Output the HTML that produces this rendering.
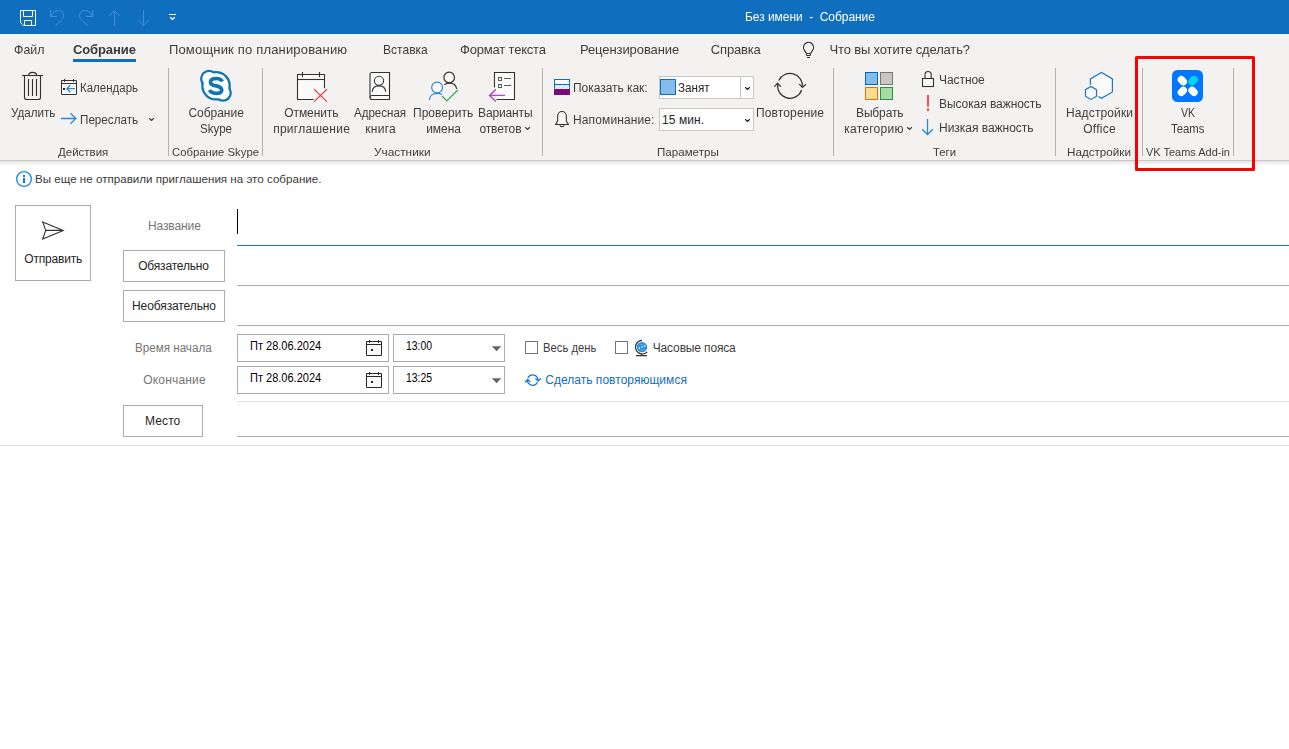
<!DOCTYPE html>
<html lang="ru"><head><meta charset="utf-8"><title>Без имени - Собрание</title>
<style>
*{box-sizing:border-box;margin:0;padding:0}
html,body{width:1289px;height:749px;overflow:hidden;background:#fff}
body{position:relative;font-family:"Liberation Sans",sans-serif;font-size:12px;color:#444}
.t{position:absolute;white-space:pre;display:block}
.abs{position:absolute}
#titlebar{left:0;top:0;width:1289px;height:34px;background:#106ebe}
#ribbon{left:0;top:34px;width:1289px;height:126px;background:#f3f2f1}
#shadow{left:0;top:160px;width:1289px;height:6px;background:linear-gradient(to bottom,#c9c8c7 0,#c9c8c7 1px,#e5e5e5 1px,#efefef 3px,#ffffff 6px)}
.sep{position:absolute;top:68px;width:1px;height:88px;background:#b3b0ad}
.btn{position:absolute;border:1px solid #adaaa8;background:#fff}
.box{position:absolute;border:1px solid #adaaa8;background:#fff}
.dd{position:absolute;border:1px solid #c6c6c6;background:#fff}
.hl{position:absolute;height:1px}
svg{position:absolute;left:0;top:0;overflow:visible}
</style></head>
<body>
<div class="abs" id="titlebar"></div>
<div class="abs" id="ribbon"></div>
<div class="abs" id="shadow"></div>
<div class="sep" style="left:168px"></div>
<div class="sep" style="left:262px"></div>
<div class="sep" style="left:542px"></div>
<div class="sep" style="left:833px"></div>
<div class="sep" style="left:1055px"></div>
<div class="sep" style="left:1142px"></div>
<div class="sep" style="left:1233px"></div>
<div class="abs" style="left:73px;top:59px;width:63px;height:3px;background:#106ebe"></div>
<div class="dd" style="left:659px;top:76px;width:95px;height:23px"></div>
<div class="abs" style="left:740px;top:77px;width:1px;height:21px;background:#c6c6c6"></div>
<div class="dd" style="left:659px;top:108px;width:95px;height:23px"></div>
<div class="btn" style="left:15px;top:205px;width:76px;height:76px"></div>
<div class="btn" style="left:123px;top:250px;width:102px;height:32px"></div>
<div class="btn" style="left:123px;top:290px;width:102px;height:32px"></div>
<div class="btn" style="left:123px;top:405px;width:80px;height:32px"></div>
<div class="box" style="left:237px;top:334px;width:152px;height:28px"></div>
<div class="box" style="left:393px;top:334px;width:112px;height:28px"></div>
<div class="box" style="left:237px;top:366px;width:152px;height:28px"></div>
<div class="box" style="left:393px;top:366px;width:112px;height:28px"></div>
<div class="box" style="left:525px;top:341px;width:13px;height:13px;border-color:#767676"></div>
<div class="box" style="left:615px;top:341px;width:13px;height:13px;border-color:#767676"></div>
<div class="hl" style="left:237px;top:245px;width:1052px;background:#0f7ad5"></div>
<div class="hl" style="left:237px;top:285px;width:1052px;background:#adaaa8"></div>
<div class="hl" style="left:237px;top:325px;width:1052px;background:#adaaa8"></div>
<div class="hl" style="left:237px;top:401px;width:1052px;background:#e1e1e1"></div>
<div class="hl" style="left:237px;top:436px;width:1052px;background:#adaaa8"></div>
<div class="hl" style="left:0px;top:445px;width:1289px;background:#e1e1e1"></div>
<div class="abs" style="left:237px;top:209px;width:1px;height:25px;background:#000"></div>
<div class="abs" style="left:1135px;top:56px;width:120px;height:115px;border:3px solid #ff0000;border-radius:1.5px"></div>
<span class="t" style="left:662.09px;top:114px;font-size:12px;line-height:12px;color:#262626;letter-spacing:0.08px;">15 мин.</span>
<span class="t" style="left:35.05px;top:173px;font-size:12px;line-height:12px;color:#3b3a39;transform:scale(0.9671,0.92);transform-origin:0 10px;">Вы еще не отправили приглашения на это собрание.</span>
<span class="t" style="left:24.23px;top:253px;font-size:12px;line-height:12px;color:#262626;letter-spacing:-0.17px;">Отправить</span>
<span class="t" style="left:148.02px;top:220px;font-size:12px;line-height:12px;color:#767676;letter-spacing:-0.12px;">Название</span>
<span class="t" style="left:138.23px;top:260px;font-size:12px;line-height:12px;color:#262626;letter-spacing:-0.18px;">Обязательно</span>
<span class="t" style="left:132.02px;top:300px;font-size:12px;line-height:12px;color:#262626;letter-spacing:-0.1px;">Необязательно</span>
<span class="t" style="left:135.05px;top:342px;font-size:12px;line-height:12px;color:#767676;transform:scale(0.9693,1);transform-origin:0 10px;">Время начала</span>
<span class="t" style="left:250.11px;top:340px;font-size:12px;line-height:12px;color:#000000;transform:scale(0.9187,1);transform-origin:0 10px;">Пт 28.06.2024</span>
<span class="t" style="left:406.41px;top:340px;font-size:12px;line-height:12px;color:#000000;transform:scale(0.8692,1);transform-origin:0 10px;">13:00</span>
<span class="t" style="left:543.08px;top:342px;font-size:12px;line-height:12px;color:#3d3d3d;transform:scale(0.9376,1);transform-origin:0 10px;">Весь день</span>
<span class="t" style="left:652.76px;top:342px;font-size:12px;line-height:12px;color:#3d3d3d;letter-spacing:-0.15px;">Часовые пояса</span>
<span class="t" style="left:143.33px;top:374px;font-size:12px;line-height:12px;color:#767676;letter-spacing:0.16px;">Окончание</span>
<span class="t" style="left:250.11px;top:372px;font-size:12px;line-height:12px;color:#000000;transform:scale(0.9187,1);transform-origin:0 10px;">Пт 28.06.2024</span>
<span class="t" style="left:406.4px;top:372px;font-size:12px;line-height:12px;color:#000000;transform:scale(0.8702,1);transform-origin:0 10px;">13:25</span>
<span class="t" style="left:545.19px;top:374px;font-size:12px;line-height:12px;color:#106ebe;letter-spacing:0.03px;">Сделать повторяющимся</span>
<span class="t" style="left:145.02px;top:415px;font-size:12px;line-height:12px;color:#262626;letter-spacing:0.11px;">Место</span>
<div class="abs" id="gtxt" style="left:0;top:0;width:1289px;height:170px;will-change:transform">
<span class="t" style="left:745.02px;top:11px;font-size:12px;line-height:12px;color:#ffffff;letter-spacing:-0.05px;">Без имени  -  Собрание</span>
<span class="t" style="left:14.19px;top:43px;font-size:13px;line-height:13px;color:#3d3d3d;transform:scale(0.9532,1);transform-origin:0 11px;">Файл</span>
<span class="t" style="left:72.97px;top:43px;font-size:13px;line-height:13px;color:#3b3a39;font-weight:700;letter-spacing:-0.1px;">Собрание</span>
<span class="t" style="left:168.95px;top:43px;font-size:13px;line-height:13px;color:#3d3d3d;letter-spacing:0.18px;">Помощник по планированию</span>
<span class="t" style="left:383.01px;top:43px;font-size:13px;line-height:13px;color:#3d3d3d;transform:scale(0.9268,1);transform-origin:0 11px;">Вставка</span>
<span class="t" style="left:460.05px;top:43px;font-size:13px;line-height:13px;color:#3d3d3d;letter-spacing:-0.19px;">Формат текста</span>
<span class="t" style="left:579.93px;top:43px;font-size:13px;line-height:13px;color:#3d3d3d;letter-spacing:-0.08px;">Рецензирование</span>
<span class="t" style="left:710.84px;top:43px;font-size:13px;line-height:13px;color:#3d3d3d;letter-spacing:-0.17px;">Справка</span>
<span class="t" style="left:829.48px;top:43px;font-size:13px;line-height:13px;color:#3d3d3d;letter-spacing:-0.15px;">Что вы хотите сделать?</span>
<span class="t" style="left:10.99px;top:107px;font-size:12px;line-height:12px;color:#3d3d3d;transform:scale(0.9686,1);transform-origin:0 10px;">Удалить</span>
<span class="t" style="left:80.06px;top:82px;font-size:12px;line-height:12px;color:#3d3d3d;transform:scale(0.9594,1);transform-origin:0 10px;">Календарь</span>
<span class="t" style="left:80.05px;top:114px;font-size:12px;line-height:12px;color:#3d3d3d;transform:scale(0.9718,1);transform-origin:0 10px;">Переслать</span>
<span class="t" style="left:58.22px;top:146px;font-size:12px;line-height:12px;color:#3d3d3d;transform:scale(0.9563,0.915);transform-origin:0 10px;">Действия</span>
<span class="t" style="left:188.39px;top:107px;font-size:12px;line-height:12px;color:#3d3d3d;letter-spacing:-0.02px;">Собрание</span>
<span class="t" style="left:199.78px;top:123px;font-size:12px;line-height:12px;color:#3d3d3d;transform:scale(0.9603,1);transform-origin:0 10px;">Skype</span>
<span class="t" style="left:172.23px;top:146px;font-size:12px;line-height:12px;color:#3d3d3d;transform:scale(0.9428,0.915);transform-origin:0 10px;">Собрание Skype</span>
<span class="t" style="left:284.23px;top:107px;font-size:12px;line-height:12px;color:#3d3d3d;letter-spacing:-0.08px;">Отменить</span>
<span class="t" style="left:273.17px;top:123px;font-size:12px;line-height:12px;color:#3d3d3d;letter-spacing:0.27px;">приглашение</span>
<span class="t" style="left:354.38px;top:107px;font-size:12px;line-height:12px;color:#3d3d3d;transform:scale(0.9625,1);transform-origin:0 10px;">Адресная</span>
<span class="t" style="left:365.19px;top:123px;font-size:12px;line-height:12px;color:#3d3d3d;letter-spacing:0.31px;">книга</span>
<span class="t" style="left:413.03px;top:107px;font-size:12px;line-height:12px;color:#3d3d3d;letter-spacing:0.02px;">Проверить</span>
<span class="t" style="left:426.17px;top:123px;font-size:12px;line-height:12px;color:#3d3d3d;letter-spacing:-0.05px;">имена</span>
<span class="t" style="left:478.02px;top:107px;font-size:12px;line-height:12px;color:#3d3d3d;letter-spacing:-0.14px;">Варианты</span>
<span class="t" style="left:479.4px;top:123px;font-size:12px;line-height:12px;color:#3d3d3d;letter-spacing:-0.12px;">ответов</span>
<span class="t" style="left:373.98px;top:146px;font-size:12px;line-height:12px;color:#3d3d3d;transform:scale(0.9862,0.915);transform-origin:0 10px;">Участники</span>
<span class="t" style="left:573.03px;top:82px;font-size:12px;line-height:12px;color:#3d3d3d;letter-spacing:-0.04px;">Показать как:</span>
<span class="t" style="left:677.72px;top:82px;font-size:12px;line-height:12px;color:#262626;transform:scale(0.9734,1);transform-origin:0 10px;">Занят</span>
<span class="t" style="left:573.02px;top:114px;font-size:12px;line-height:12px;color:#3d3d3d;letter-spacing:0.12px;">Напоминание:</span>
<span class="t" style="left:756.03px;top:107px;font-size:12px;line-height:12px;color:#3d3d3d;letter-spacing:0.13px;">Повторение</span>
<span class="t" style="left:657.06px;top:146px;font-size:12px;line-height:12px;color:#3d3d3d;transform:scale(0.9652,0.915);transform-origin:0 10px;">Параметры</span>
<span class="t" style="left:856.02px;top:107px;font-size:12px;line-height:12px;color:#3d3d3d;letter-spacing:-0.14px;">Выбрать</span>
<span class="t" style="left:844.19px;top:123px;font-size:12px;line-height:12px;color:#3d3d3d;letter-spacing:0.27px;">категорию</span>
<span class="t" style="left:938.96px;top:74px;font-size:12px;line-height:12px;color:#3d3d3d;letter-spacing:-0.06px;">Частное</span>
<span class="t" style="left:939.02px;top:98px;font-size:12px;line-height:12px;color:#3d3d3d;letter-spacing:-0.07px;">Высокая важность</span>
<span class="t" style="left:939.02px;top:122px;font-size:12px;line-height:12px;color:#3d3d3d;letter-spacing:-0.03px;">Низкая важность</span>
<span class="t" style="left:933.45px;top:146px;font-size:12px;line-height:12px;color:#3d3d3d;transform:scale(0.9434,0.915);transform-origin:0 10px;">Теги</span>
<span class="t" style="left:1066.02px;top:107px;font-size:12px;line-height:12px;color:#3d3d3d;letter-spacing:0.13px;">Надстройки</span>
<span class="t" style="left:1083.13px;top:123px;font-size:12px;line-height:12px;color:#3d3d3d;letter-spacing:0.28px;">Office</span>
<span class="t" style="left:1067.04px;top:146px;font-size:12px;line-height:12px;color:#3d3d3d;transform:scale(0.9715,0.915);transform-origin:0 10px;">Надстройки</span>
<span class="t" style="left:1180.75px;top:107px;font-size:12px;line-height:12px;color:#3d3d3d;transform:scale(0.8845,1);transform-origin:0 10px;">VK</span>
<span class="t" style="left:1171.04px;top:123px;font-size:12px;line-height:12px;color:#3d3d3d;transform:scale(0.9469,1);transform-origin:0 10px;">Teams</span>
<span class="t" style="left:1145.55px;top:146px;font-size:12px;line-height:12px;color:#3d3d3d;transform:scale(0.9143,0.915);transform-origin:0 10px;">VK Teams Add-in</span>
</div>
<svg width="1289" height="749" viewBox="0 0 1289 749" fill="none" stroke-linecap="butt" stroke-linejoin="miter">
<!-- quick access toolbar -->
<g stroke="#ffffff" stroke-width="1">
<path d="M20.500 10.500H35.500V25.500H23.500L20.500 22.500Z"/>
<path d="M23.500 10.500V16.500H32.500V10.500"/>
<path d="M24.500 25.500V20.500H31.500V25.500"/>
<path d="M169 14.500H176"/>
<path d="M170.500 17.500L172.500 19.500L174.500 17.500" stroke-width="1.300" stroke-linecap="round" stroke-linejoin="round"/>
</g>
<g stroke="#4290da" stroke-width="1">
<path d="M50.500 10V16.500H57"/>
<path d="M50.800 16.200C52.600 12.600 55.200 10.500 58.400 10.500C61.500 10.500 63.700 12.600 63.700 15.500C63.700 17.400 62.800 18.800 61.200 20.400L55.400 25.800"/>
<path d="M92.800 10V16.500H86.300"/>
<path d="M92.500 16.200C90.700 12.600 88.100 10.500 84.900 10.500C81.800 10.500 79.600 12.600 79.600 15.500C79.600 17.400 80.500 18.800 82.100 20.400L87.900 25.800"/>
<path d="M114.500 10.800V26M109.200 16L114.500 10.700L119.800 16"/>
<path d="M143.500 10V25.200M138.200 20L143.500 25.300L148.800 20"/>
</g>
<!-- bulb -->
<g stroke="#333231" stroke-width="1.200">
<path d="M806.500 53.500L804.600 50.600A5 5 0 1 1 812.400 50.600L810.500 53.500"/>
<path d="M806.500 53.500H810.500V55.500H806.500Z" stroke-width="1"/>
<path d="M807 57.500H810" stroke-width="1"/>
</g>
<!-- trash -->
<g stroke="#333231" stroke-width="1.100">
<path d="M22 75.500H43"/>
<path d="M28.500 75.500C28.500 73.300 30 72.400 32.600 72.400C35.200 72.400 36.700 73.300 36.700 75.500"/>
<path d="M24.500 75.500V97.500Q24.500 99.500 26.500 99.500H38.500Q40.500 99.500 40.500 97.500V75.500"/>
<path d="M28.500 79V96M32.500 79V96M36.500 79V96"/>
</g>
<!-- calendar with arrow -->
<g stroke="#333231" stroke-width="1">
<path d="M61.500 80.500H76.500V94.500H61.500Z" fill="#fafafa"/>
<path d="M61.500 83.500H76.500"/>
<path d="M64.500 79V82M73.500 79V82"/>
<rect x="63" y="88" width="2" height="2" fill="#222" stroke="none"/>
</g>
<g stroke="#2b88d8" stroke-width="1.300">
<path d="M66.800 88.700H75M70.300 85.200L66.800 88.700L70.300 92.200"/>
<path d="M61 118.500H75.800M70.500 113.200L75.800 118.500L70.500 123.800"/>
</g>
<!-- chevrons -->
<g stroke="#444" stroke-width="1.150" stroke-linecap="round" stroke-linejoin="round">
<path d="M149.500 118.500L151.500 120.500L153.500 118.500"/>
<path d="M525.500 127.500L527.500 129.500L529.500 127.500"/>
<path d="M907.500 127.500L909.500 129.500L911.500 127.500"/>
<path d="M745.500 87.500L747.500 89.500L749.500 87.500" stroke="#222"/>
<path d="M745.500 119.500L747.500 121.500L749.500 119.500" stroke="#222"/>
</g>
<!-- skype -->
<g stroke="none">
<circle cx="216" cy="85.800" r="14.800" fill="#0e75b4"/>
<circle cx="209" cy="78.800" r="9" fill="#0e75b4"/>
<circle cx="222.900" cy="92.800" r="9" fill="#0e75b4"/>
<circle cx="216" cy="85.800" r="12.500" fill="#fff"/>
<circle cx="209" cy="78.800" r="6.700" fill="#fff"/>
<circle cx="222.900" cy="92.800" r="6.700" fill="#fff"/>
</g>
<path d="M222.300 81.600C221.400 79.500 219.200 78.500 216.100 78.500C212.600 78.500 210.500 80 210.500 82.200C210.500 84.500 212.700 85.300 216.100 85.900C219.600 86.500 221.700 87.800 221.700 90.200C221.700 92.400 219.500 93.300 216.100 93.300C213 93.300 210.700 92.300 209.500 90" stroke="#0e75b4" stroke-width="3.700"/>
<!-- cancel invitation -->
<g stroke="#333231" stroke-width="1.100">
<path d="M313.500 99.500H297.500V74.500H324.500V88.300" fill="#fafafa"/>
<path d="M297.500 79.500H324.500"/>
<path d="M302.500 72V77M319.500 72V77"/>
</g>
<path d="M314.100 89.200L326.900 101.600M326.900 89.200L314.100 101.600" stroke="#e8484f" stroke-width="1.300"/>
<!-- address book -->
<g stroke="#333231" stroke-width="1.100">
<path d="M370 74.500Q370 72.500 372 72.500H389.500V99.500H372Q370 99.500 370 97.500Z" fill="#fafafa"/>
<path d="M370 97.500Q370 95.500 372 95.500H389.500"/>
<circle cx="379" cy="80.800" r="4.600"/>
<path d="M372.200 91.800C372.500 88 375.500 85.900 379 85.900C382.500 85.900 385.400 88 385.700 91.800"/>
</g>
<!-- check names -->
<g stroke-width="1.200">
<circle cx="449.200" cy="77.500" r="5.300" stroke="#333231" fill="#fafafa"/>
<path d="M444.300 84.700C446 83.500 448 83.200 449.800 83.200C453.500 83.200 456 85.500 456.700 89" stroke="#333231"/>
<circle cx="437.100" cy="87.500" r="5.400" stroke="#2b88d8" fill="#fafafa"/>
<path d="M429.400 100C429.600 96 432.800 93.400 437 93.400C439 93.400 440.700 93.800 442 94.500" stroke="#2b88d8"/>
<path d="M442 96L446.900 100.900L457.700 90" stroke="#3aa655" stroke-width="1.300"/>
</g>
<!-- response options -->
<g stroke="#333231" stroke-width="1.100">
<path d="M494.500 87.500V72.500H514.500V99.500H496.500" fill="#fafafa"/>
<rect x="498.500" y="77.500" width="3" height="3" stroke="#605e5c"/>
<rect x="498.500" y="84.500" width="3" height="3" stroke="#605e5c"/>
<path d="M504 78.500H511M504 85.500H511" stroke="#605e5c"/>
</g>
<path d="M489.500 95.400H505M495.900 89.200L489.500 95.400L495.900 101.600" stroke="#b146c2" stroke-width="1.400"/>
<!-- show as -->
<g>
<rect x="554.500" y="79.500" width="15" height="10" fill="#fff" stroke="#0f6cbd"/>
<rect x="555" y="85" width="14" height="4" fill="#cfe5f7"/>
<path d="M555 88.500L558.500 85M559 89L563 85M563.500 89L567.500 85M567.500 89L569 87.500" stroke="#fff" stroke-width="1"/>
<path d="M554.500 84.500H569.500" stroke="#0f6cbd"/>
<rect x="554" y="89" width="16" height="6" fill="#7a0a78"/>
</g>
<!-- bell -->
<g stroke="#333231" stroke-width="1.100">
<path d="M555.500 124.500H568.500L566.300 121V116A4.300 4.500 0 0 0 557.700 116V121Z" fill="#fafafa" stroke-linejoin="round"/>
<path d="M560 125.200Q560 126.700 562 126.700Q564 126.700 564 125.200"/>
</g>
<!-- busy square -->
<rect x="660.500" y="79.500" width="15" height="15" fill="#84bceb" stroke="#106ebe"/>
<!-- recurrence -->
<g stroke="#333231" stroke-width="1.200">
<path d="M778.760 80.610A12.400 12.400 0 0 1 802.320 87.300"/>
<path d="M801.670 90.030A12.400 12.400 0 0 1 777.840 83.400"/>
<path d="M799.200 84.200L802.400 87.400L805.800 84.200"/>
<path d="M774.200 86.600L777.600 83.300L780.900 86.600"/>
</g>
<!-- categories -->
<g stroke-width="1">
<rect x="865.500" y="72.500" width="12" height="12" fill="#84bceb" stroke="#0566b8"/>
<rect x="880.500" y="72.500" width="12" height="12" fill="#c8c6c4" stroke="#7a7876"/>
<rect x="865.500" y="87.500" width="12" height="12" fill="#f7dd93" stroke="#e0700a"/>
<rect x="880.500" y="87.500" width="12" height="12" fill="#a3dca5" stroke="#2b9140"/>
</g>
<!-- lock -->
<g stroke="#333231" stroke-width="1.100">
<rect x="922.500" y="78.500" width="11" height="8" fill="#fafafa"/>
<path d="M925 78.500V74.600Q925 71.500 928.100 71.500Q931.200 71.500 931.200 74.600V78.500"/>
</g>
<!-- high importance -->
<path d="M928 95V106.700M928 108.600V111" stroke="#ee4f58" stroke-width="2.100"/>
<!-- low importance -->
<path d="M927.500 119V134.300M922.200 129.200L927.500 134.500L932.900 129.200" stroke="#2b88d8" stroke-width="1.300"/>
<!-- office add-ins -->
<g stroke="#1976cb" stroke-width="1.200">
<path d="M1090.400 84.700V78.900L1101.500 72.400L1112.400 78.900V91.900L1101.500 98.300L1098.400 96.500" fill="#fafafa"/>
<path d="M1091 86.400L1096.500 89.700V96.200L1091 99.400L1085.500 96.200V89.700Z" fill="#fafafa"/>
</g>
<!-- VK Teams -->
<g>
<rect x="1172" y="70" width="31" height="32" rx="5.500" fill="#0077ff"/>
<g transform="translate(1187.700 86)">
<rect x="-3.700" y="-12.650" width="7.400" height="10.100" rx="3.700" fill="#fff" transform="rotate(-45)"/>
<rect x="-3.700" y="-12.650" width="7.400" height="10.100" rx="3.700" fill="#00d7e8" transform="rotate(45)"/>
<rect x="-3.700" y="-12.650" width="7.400" height="10.100" rx="3.700" fill="#fff" transform="rotate(135)"/>
<rect x="-3.700" y="-12.650" width="7.400" height="10.100" rx="3.700" fill="#fff" transform="rotate(-135)"/>
</g>
</g>
<!-- info icon -->
<circle cx="24" cy="179" r="7.400" stroke="#2490de" stroke-width="1.400" fill="#fafafa"/>
<rect x="23" y="175" width="2" height="2" fill="#0f7ad5"/>
<rect x="23" y="178" width="2" height="5" fill="#0f7ad5"/>
<!-- send -->
<path d="M42.700 221.900L63.300 230.400L42.700 239L45.700 230.400ZM45.700 230.400H63" stroke="#333231" stroke-width="1.100"/>
<!-- date calendars -->
<g stroke="#262626" stroke-width="1">
<path d="M366.500 341.500H381.500V355.500H366.500Z" fill="#f8f8f8"/>
<path d="M366.500 344.500H381.500M369.500 340V343M378.500 340V343"/>
<rect x="371" y="349" width="2" height="2" fill="#262626" stroke="none"/>
<path d="M366.500 373.500H381.500V387.500H366.500Z" fill="#f8f8f8"/>
<path d="M366.500 376.500H381.500M369.500 372V375M378.500 372V375"/>
<rect x="371" y="381" width="2" height="2" fill="#262626" stroke="none"/>
</g>
<!-- triangles -->
<path d="M491.800 346.200H501.400L496.600 351.200Z" fill="#666"/>
<path d="M491.800 378.200H501.400L496.600 383.200Z" fill="#666"/>
<!-- globe -->
<g stroke-width="1">
<circle cx="642" cy="347.100" r="5.200" fill="#2590de"/>
<g fill="#ffffff" stroke="none">
<rect x="638.800" y="347.300" width="1.300" height="1.700" opacity="0.950"/>
<rect x="641.300" y="346.200" width="1.600" height="1.600" opacity="0.800"/>
<rect x="644.100" y="345.200" width="1.300" height="1.700" opacity="0.950"/>
<rect x="639" y="344.300" width="4.500" height="0.600" opacity="0.500" transform="rotate(-12 641 344.600)"/>
<rect x="640.300" y="349.800" width="4.500" height="0.600" opacity="0.500" transform="rotate(-12 642.500 350)"/>
</g>
<path d="M642 340.400A6.800 6.800 0 1 0 647.300 351.800" stroke="#333231" stroke-width="1.200"/>
<path d="M641.800 353.800V355.500M636 355.600H647.100" stroke="#333231" stroke-width="1.200"/>
</g>
<!-- make recurring -->
<g stroke="#1f7acc" stroke-width="1.300">
<path d="M527.990 377.900A5.200 5.200 0 0 1 537.880 380.550"/>
<path d="M537.410 382.300A5.200 5.200 0 0 1 527.520 379.650"/>
<path d="M535.400 378.400L538.100 381L540.800 378.200"/>
<path d="M525.100 382.200L527.600 379.500L530.400 382"/>
</g>
</svg>

</body></html>
